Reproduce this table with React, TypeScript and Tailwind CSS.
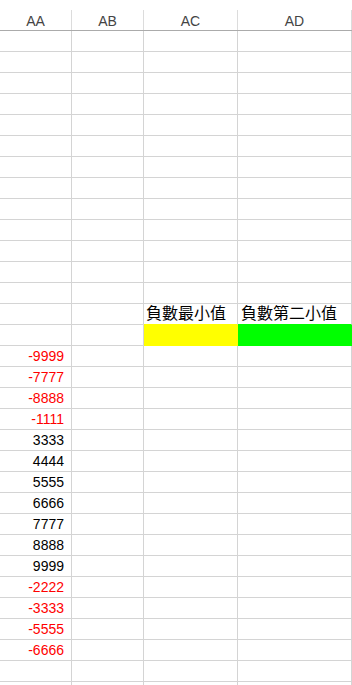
import React from "react";

const data: (number | null)[] = [
  -9999, -7777, -8888, -1111, 3333, 4444, 5555, 6666, 7777, 8888, 9999,
  -2222, -3333, -5555, -6666,
];

const cols = ["AA", "AB", "AC", "AD"];
const widths = ["w-[72px]", "w-[72px]", "w-[94px]", "w-[114px]"];

function NumCell({ v }: { v: number | null }) {
  return (
    <div className="w-[72px] h-[21px] border-r border-b border-[#d4d4d4] flex justify-end pr-[7px] pt-[1px] leading-[19px] text-[14px]">
      {v !== null && (
        <span className={v < 0 ? "text-[#ff0000]" : "text-black"}>{v}</span>
      )}
    </div>
  );
}

function Empty({ w }: { w: string }) {
  return <div className={`${w} h-[21px] border-r border-b border-[#d4d4d4]`} />;
}

export default function App() {
  const rows: React.ReactNode[] = [];
  for (let i = 0; i < 32; i++) {
    if (i === 13) {
      rows.push(
        <div key={i} className="flex">
          <Empty w="w-[72px]" />
          <Empty w="w-[72px]" />
          <div
            className="w-[94px] h-[21px] border-r border-b border-r-[#d4d4d4] border-b-[#ffff00] pl-[2px] leading-[17px] text-[16px] whitespace-nowrap text-black"
            style={{ fontFamily: '"Noto Sans CJK TC", "Noto Sans CJK SC", sans-serif' }}
          >
            負數最小值
          </div>
          <div
            className="w-[114px] h-[21px] border-r border-b border-r-[#d4d4d4] border-b-[#00ff00] pl-[3px] leading-[17px] text-[16px] whitespace-nowrap text-black"
            style={{ fontFamily: '"Noto Sans CJK TC", "Noto Sans CJK SC", sans-serif' }}
          >
            負數第二小值
          </div>
        </div>
      );
    } else if (i === 14) {
      rows.push(
        <div key={i} className="flex">
          <Empty w="w-[72px]" />
          <Empty w="w-[72px]" />
          <div className="w-[94px] h-[21px] bg-[#ffff00] border-r border-b border-[#ffff00]" />
          <div className="w-[114px] h-[21px] bg-[#00ff00] border-r border-b border-[#00ff00]" />
        </div>
      );
    } else {
      const idx = i - 15;
      const v = idx >= 0 && idx < data.length ? data[idx] : null;
      rows.push(
        <div key={i} className="flex">
          <NumCell v={v} />
          <Empty w="w-[72px]" />
          <Empty w="w-[94px]" />
          <Empty w="w-[114px]" />
        </div>
      );
    }
  }

  return (
    <div
      className="w-[352px] h-[685px] overflow-hidden bg-white"
      style={{ fontFamily: '"Liberation Sans", Arial, sans-serif' }}
    >
      <div className="flex h-[31px] border-b border-[#ababab]">
        {cols.map((c, k) => (
          <div key={c} className={`${widths[k]} pt-[10px]`}>
            <div className="h-[20px] border-r border-[#dcdcdc] text-center text-[14px] leading-[20px] pt-[1px] text-[#444444]">
              {c}
            </div>
          </div>
        ))}
      </div>
      {rows}
    </div>
  );
}
